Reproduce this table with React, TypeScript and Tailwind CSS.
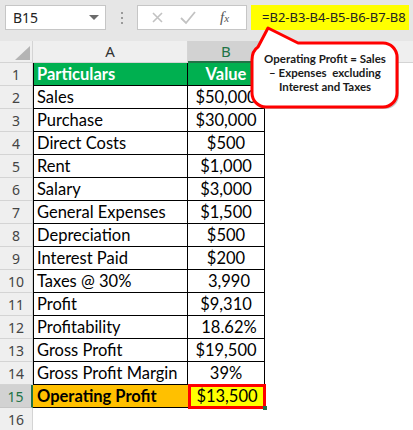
import React from "react";

type Row = {
  label: string;
  value: string;
  shift?: boolean;
};

const rows: Row[] = [
  { label: "Sales", value: "$50,000" },
  { label: "Purchase", value: "$30,000" },
  { label: "Direct Costs", value: "$500" },
  { label: "Rent", value: "$1,000" },
  { label: "Salary", value: "$3,000" },
  { label: "General Expenses", value: "$1,500" },
  { label: "Depreciation", value: "$500" },
  { label: "Interest Paid", value: "$200" },
  { label: "Taxes @ 30%", value: "3,990", shift: true },
  { label: "Profit", value: "$9,310" },
  { label: "Profitability", value: "18.62%", shift: true },
  { label: "Gross Profit", value: "$19,500" },
  { label: "Gross Profit Margin", value: "39%" },
];

const cellFont = { fontFamily: "Lato, 'Liberation Sans', sans-serif" };
const uiFont = { fontFamily: "'Noto Sans', 'Open Sans', sans-serif" };

const bubble =
  "M258 47 L268 28 L298 43 H383 A14 14 0 0 1 397 57 V93 A14 14 0 0 1 383 107 H266 A14 14 0 0 1 252 93 V60 Q252 51 258 47 Z";

const RowHead = ({ n, active }: { n: number; active?: boolean }) => (
  <div
    style={uiFont}
    className={
      active
        ? "w-[33px] h-full shrink-0 flex items-center justify-center bg-[#d2d2d2] text-[#217346] border-b border-[#c6c6c6] border-r-2 border-r-[#217346] text-[14px]"
        : "w-[33px] h-full shrink-0 flex items-center justify-center bg-[#efefef] text-[#444] border-b border-r border-[#d4d4d4] text-[14px]"
    }
  >
    {n}
  </div>
);

const Callout = () => (
  <>
    <svg
      width={413}
      height={120}
      viewBox="0 0 413 120"
      style={{ position: "absolute", left: 0, top: 0 }}
    >
      <path d={bubble} fill="#8a8a8a" fillOpacity={0.5} transform="translate(2 2)" />
      <path d={bubble} fill="#ffffff" stroke="#ff0000" strokeWidth={3} strokeLinejoin="round" />
    </svg>
    <div
      className="absolute left-[254px] top-[52px] w-[142px] text-center text-[11.5px] leading-[14px] font-bold text-[#1a1a1a]"
      style={cellFont}
    >
      <div>Operating Profit = Sales</div>
      <div>– Expenses&nbsp; excluding</div>
      <div>Interest and Taxes</div>
    </div>
  </>
);

const App = () => {
  return (
    <div className="relative w-[413px] h-[430px] overflow-hidden bg-white" style={cellFont}>
      {/* formula bar */}
      <div className="h-[41px] bg-[#e6e6e6] flex items-start pt-[5px] pl-[5px]">
        <div
          className="w-[101px] h-[25px] shrink-0 bg-white border border-[#c6c6c6] flex items-center justify-between pl-[7px] pr-[6px] text-[14px] text-[#222]"
          style={uiFont}
        >
          <span>B15</span>
          <span className="w-0 h-0 border-l-[5px] border-r-[5px] border-t-[5px] border-l-transparent border-r-transparent border-t-[#6b6b6b]" />
        </div>
        <div className="w-[31px] h-[25px] shrink-0 flex flex-col items-center justify-center gap-[3px]">
          <span className="w-[2px] h-[2px] bg-[#9a9a9a]" />
          <span className="w-[2px] h-[2px] bg-[#9a9a9a]" />
          <span className="w-[2px] h-[2px] bg-[#9a9a9a]" />
        </div>
        <div className="w-[110px] h-[25px] shrink-0 bg-white border border-[#c6c6c6] flex items-center">
          <svg width="40" height="23" viewBox="0 0 40 23">
            <path d="M15 7 L24 16 M24 7 L15 16" stroke="#c2c2c2" strokeWidth="1.6" />
          </svg>
          <svg width="30" height="23" viewBox="0 0 30 23">
            <path d="M3 12 L8 17 L17 6" stroke="#c2c2c2" strokeWidth="1.8" fill="none" />
          </svg>
          <span
            className="ml-[12px] italic text-[15px] text-[#555]"
            style={{ fontFamily: "'Liberation Serif', serif" }}
          >
            f<span className="text-[11px]">x</span>
          </span>
        </div>
        <div
          className="ml-[4px] w-[158px] h-[25px] shrink-0 bg-[#ffff00] flex items-center pl-[11px] text-[13px] whitespace-nowrap text-[#222]"
          style={uiFont}
        >
          =B2-B3-B4-B5-B6-B7-B8
        </div>
      </div>

      {/* column headers */}
      <div className="h-[22px] flex bg-[#efefef] text-[15px]" style={uiFont}>
        <div className="w-[33px] h-full border-r border-b border-[#d4d4d4] relative">
          <svg width="33" height="22" className="absolute left-0 top-0">
            <path d="M15 19 L30 19 L30 5 Z" fill="#b4b4b4" />
          </svg>
        </div>
        <div className="w-[155px] h-full border-r border-b border-[#d4d4d4] flex items-center justify-center text-[#333]">
          A
        </div>
        <div className="w-[77px] h-full bg-[#d2d2d2] border-r border-[#c6c6c6] border-b-2 border-b-[#217346] flex items-center justify-center text-[#217346]">
          B
        </div>
        <div className="flex-1 h-full border-b border-[#d4d4d4]" />
      </div>

      {/* row 1 */}
      <div className="h-[23px] flex text-[16.5px]">
        <RowHead n={1} />
        <div className="w-[155px] h-full bg-[#00b050] text-white font-bold border-l border-r border-b border-black flex items-center pl-[3px]">
          Particulars
        </div>
        <div className="w-[77px] h-full bg-[#00b050] text-white font-bold border-r border-b border-black flex items-center justify-center">
          Value
        </div>
      </div>

      {rows.map((r, i) => (
        <div key={r.label} className="h-[23px] flex text-[16.5px] text-black">
          <RowHead n={i + 2} />
          <div className="w-[155px] h-full border-l border-r border-b border-black flex items-center pl-[3px]">
            {r.label}
          </div>
          <div
            className={
              r.shift
                ? "w-[77px] h-full border-r border-b border-black flex items-center justify-center pl-[6px]"
                : "w-[77px] h-full border-r border-b border-black flex items-center justify-center"
            }
          >
            {r.value}
          </div>
        </div>
      ))}

      {/* row 15 */}
      <div className="h-[23px] flex text-[16.5px] text-black">
        <RowHead n={15} active />
        <div className="w-[155px] h-full bg-[#ffc000] font-bold border-b border-black flex items-center pl-[4px]">
          Operating Profit
        </div>
        <div className="relative w-[78px] h-[25px] -mt-[1px] bg-[#ffff00] border-[3px] border-[#ff0000] flex items-center justify-center">
          $13,500
          <span className="absolute -right-[4px] -bottom-[4px] w-[4px] h-[4px] bg-[#217346]" />
        </div>
      </div>

      {/* row 16 */}
      <div className="h-[23px] flex text-[16.5px]">
        <RowHead n={16} />
      </div>

      <Callout />
    </div>
  );
};

export default App;
